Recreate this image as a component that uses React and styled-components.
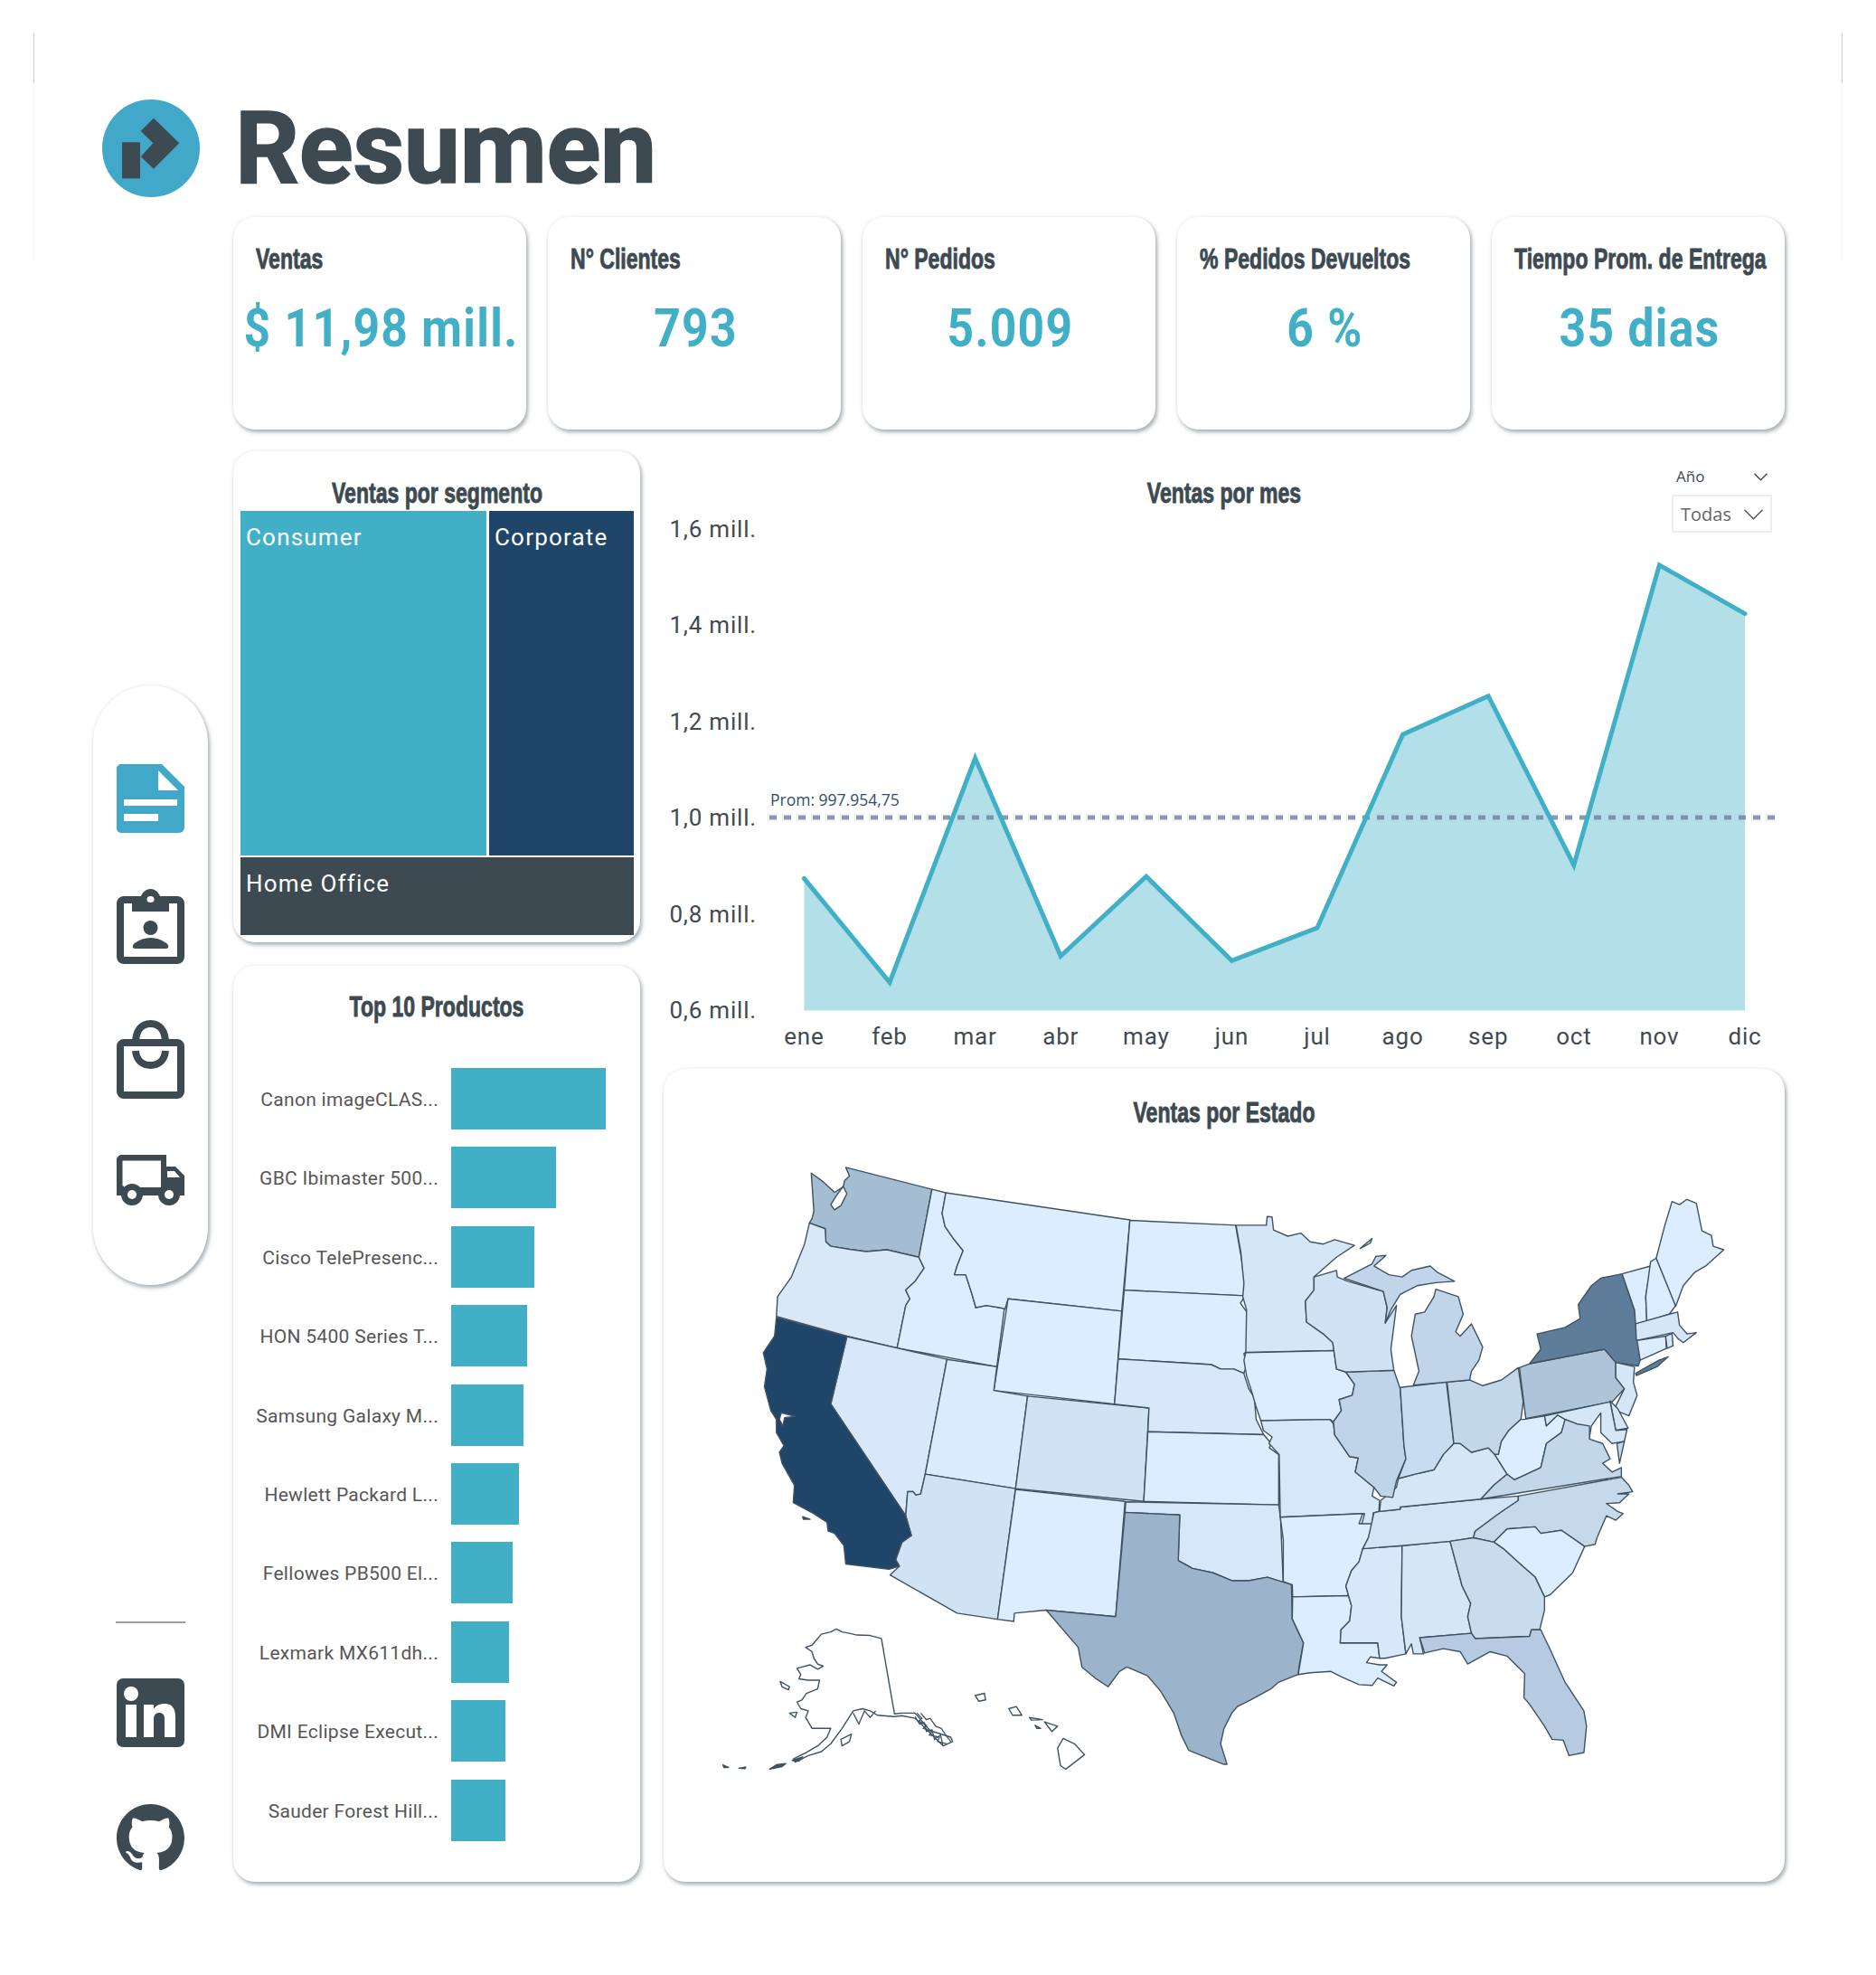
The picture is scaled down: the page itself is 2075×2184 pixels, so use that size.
import styled, { createGlobalStyle } from "styled-components";

const GlobalStyle = createGlobalStyle`
  html, body {
    margin: 0;
    padding: 0;
    background: #fff;
  }
  * {
    box-sizing: border-box;
  }
`;

const DARK = "#3d4a52";
const TEAL = "#41b0c7";
const TITLE_FONT = `"Liberation Sans", sans-serif`;
const DIN_FONT = `Roboto, "Liberation Sans", sans-serif`;

const Page = styled.div`
  position: relative;
  width: 2075px;
  height: 2184px;
  padding: 110px 101px 0 103px;
  overflow: hidden;
  background: #fff;
  color: ${DARK};
`;

const CornerLine = styled.div`
  position: absolute;
  top: 37px;
  ${(p) => (p.$right ? "right: 37px;" : "left: 37px;")}
  width: 1px;
  height: 253px;
  background: linear-gradient(#d4d4d4 0, #d4d4d4 53px, #f9f9f9 54px, #f9f9f9 100%);
`;

const Header = styled.header`
  display: flex;
  align-items: center;
  gap: 39px;
  height: 108px;
  margin-left: 10px;
`;

const LogoMark = styled.svg`
  width: 108px;
  height: 108px;
  flex: none;
`;

const PageTitle = styled.h1`
  margin: 0;
  font: 700 111px/108px ${DIN_FONT};
  letter-spacing: -0.4px;
  color: ${DARK};
  -webkit-text-stroke: 1.6px ${DARK};
`;

const Body = styled.div`
  display: flex;
  gap: 28px;
  margin-top: 22px;
`;

const Rail = styled.aside`
  display: flex;
  flex-direction: column;
  align-items: center;
  width: 127px;
  flex: none;
  padding-top: 518px;
`;

const Pill = styled.nav`
  display: flex;
  flex-direction: column;
  align-items: center;
  gap: 62px;
  width: 127px;
  height: 663px;
  padding-top: 87px;
  border-radius: 64px;
  background: #fff;
  box-shadow: 2px 3px 4px rgba(90, 105, 115, 0.5), 0 0 5px rgba(90, 105, 115, 0.12);
`;

const RailIcon = styled.svg`
  display: block;
  width: 75px;
  height: ${(p) => p.$h}px;
  flex: none;
`;

const Divider = styled.div`
  width: 77px;
  height: 2px;
  margin-top: 372px;
  background: #9a9fa3;
`;

const SocialList = styled.div`
  display: flex;
  flex-direction: column;
  gap: 63px;
  margin-top: 61px;
`;

const Content = styled.main`
  display: flex;
  flex-direction: column;
  gap: 24px;
  width: 1716px;
`;

const KpiRow = styled.section`
  display: flex;
  gap: 24px;
`;

const Card = styled.div`
  background: #fff;
  border-radius: 24px;
  box-shadow: 2px 3px 4px rgba(90, 105, 115, 0.5), 0 0 5px rgba(90, 105, 115, 0.12);
`;

const KpiCard = styled(Card)`
  width: 324px;
  height: 235px;
  padding: 28px 0 0 25px;
`;

const CardTitle = styled.h2`
  margin: 0;
  font: 700 32px/36px ${TITLE_FONT};
  color: ${DARK};
  white-space: nowrap;
  transform: scaleX(0.72);
  transform-origin: ${(p) => (p.$left ? "left center" : "center")};
  text-align: ${(p) => (p.$left ? "left" : "center")};
  -webkit-text-stroke: 0.9px ${DARK};
`;

const KpiValue = styled.div`
  display: flex;
  justify-content: center;
  margin: 24px 0 0 -22px;
  font: 700 60px/70px ${DIN_FONT};
  letter-spacing: 1.5px;
  color: ${TEAL};
  white-space: nowrap;
  transform: scaleX(0.86);
`;

const Lower = styled.section`
  display: grid;
  grid-template-columns: 450px 1240px;
  gap: 26px;
`;

const LeftColumn = styled.div`
  display: flex;
  flex-direction: column;
  gap: 26px;
`;

const RightColumn = styled.div`
  display: flex;
  flex-direction: column;
`;

const TreeCard = styled(Card)`
  height: 543px;
  padding: 28px 7px 8px 8px;
`;

const TreeMap = styled.div`
  display: grid;
  grid-template-columns: 272px 160px;
  grid-template-rows: 381px 86px;
  gap: 2px 3px;
  margin-top: 2px;
`;

const TreeCell = styled.div`
  grid-column: ${(p) => p.$span || "auto"};
  padding: 13px 6px;
  background: ${(p) => p.$bg};
  color: #fff;
  font: 400 26px/32px ${DIN_FONT};
  letter-spacing: 1.2px;
`;

const TopCard = styled(Card)`
  height: 1013px;
  padding: 27px 0 0 0;
`;

const BarList = styled.div`
  display: flex;
  flex-direction: column;
  gap: 19.4px;
  margin-top: 50px;
`;

const BarRow = styled.div`
  display: flex;
  align-items: center;
  gap: 14px;
  height: 68px;
`;

const BarLabel = styled.div`
  width: 227px;
  flex: none;
  padding-top: 2px;
  text-align: right;
  font: 400 21px/26px ${DIN_FONT};
  letter-spacing: 0.3px;
  color: #565656;
  white-space: nowrap;
`;

const Bar = styled.div`
  height: 68px;
  background: ${TEAL};
`;

const LineSection = styled.div`
  position: relative;
  height: 683px;
  padding-top: 28px;
`;

const ChartSvg = styled.svg`
  display: block;
  width: 1240px;
  height: 619px;
`;

const AxisText = styled.text`
  font: 400 26px ${DIN_FONT};
  letter-spacing: 0.8px;
  fill: #3f4a52;
  dominant-baseline: middle;
  text-anchor: ${(p) => p.$anchor};
`;

const AvgText = styled.text`
  font: 400 17.5px "Open Sans", sans-serif;
  fill: #2f4d6e;
  dominant-baseline: middle;
`;

const Slicer = styled.div`
  position: absolute;
  top: 18px;
  right: 14px;
  width: 111px;
`;

const SlicerHead = styled.div`
  display: flex;
  align-items: center;
  justify-content: space-between;
  height: 20px;
  padding: 0 5px;
  font: 500 17px/20px "Open Sans", sans-serif;
  color: #3d4a52;
`;

const SlicerBox = styled.div`
  display: flex;
  align-items: center;
  justify-content: space-between;
  height: 42px;
  margin-top: 10px;
  padding: 2px 8px 0;
  border: 2px solid #eeeeee;
  font: 400 20px/26px "Open Sans", sans-serif;
  color: #666;
`;

const Chevron = styled.svg`
  display: block;
  width: ${(p) => p.$w}px;
  height: ${(p) => Math.round(p.$w / 2) + 1}px;
  fill: none;
  stroke: ${(p) => p.$stroke};
  stroke-width: 1.5;
`;

const MapCard = styled(Card)`
  height: 899px;
  padding-top: 30px;
`;

const MapSvg = styled.svg`
  display: block;
  width: 1240px;
  height: 833px;
`;

const StateShape = styled.polygon`
  fill: ${(p) => p.$fill};
  stroke: #3f5261;
  stroke-width: 1.4;
  stroke-linejoin: round;
  vector-effect: non-scaling-stroke;
`;

const CoastLine = styled.polyline`
  fill: none;
  stroke: #3f5261;
  stroke-width: 1.3;
  vector-effect: non-scaling-stroke;
`;

// puntos tomados en la escala 2.412 x 2.063 de cada mitad del mapa
const WEST = [
  ["#a5bdd2", "375,105 385,125 372,135 368,150 345,162 315,138 283,118 290,205 285,222 278,232 320,245 322,275 335,285 385,292 430,297 485,293 570,310 605,155"],
  ["#fff", "335,190 350,170 368,148 378,165 362,192 345,202"],
  ["#d8e8f8", "278,232 320,245 322,275 335,285 385,292 430,297 485,293 570,310 584,335 560,365 535,385 546,405 535,420 512,517 378,490 190,445 193,400 230,355 265,280"],
  ["#dcedff", "605,155 642,163 632,210 640,240 660,265 688,295 672,330 665,350 695,350 712,395 722,425 750,420 785,425 800,415 778,560 512,517 535,420 546,405 535,385 560,365 584,335 570,310"],
  ["#dcedff", "642,163 1133,225 1111,433 808,405 800,428 785,425 750,420 722,425 712,395 695,350 665,350 672,330 688,295 660,265 640,240 632,210"],
  ["#dcedff", "808,405 1111,433 1092,645 770,614"],
  ["#d8e8fa", "378,491 645,543 587,805 575,850 562,853 555,845 540,845 535,900 335,645"],
  ["#d9ebfc", "645,543 778,560 770,614 860,627 828,838 587,805"],
  ["#cfe3f5", "860,627 1184,654 1170,867 828,838"],
  ["#cfe3f5", "587,805 828,838 780,1136 672,1122 493,1035 518,1015 508,1000 525,960 550,945 535,900 540,845 555,845 562,853 575,850"],
  ["#dcedff", "828,840 1120,867 1095,1130 908,1115 825,1122 823,1141 780,1136"],
  ["#1f4568", "190,447 378,491 335,645 535,900 550,945 525,960 508,1000 518,1015 490,1022 375,1010 370,968 345,940 328,935 325,915 290,895 235,870 238,830 205,780 198,755 210,740 190,710 190,680 175,660 158,605 165,565 155,528 185,490"],
  ["#1f4568", "260,902 280,908 262,908"],
  ["#dcedff", "1133,226 1415,237 1430,310 1440,375 1440,398 1118,385"],
  ["#dcedff", "1118,385 1440,398 1428,415 1445,435 1445,525 1437,530 1445,555 1437,575 1410,565 1375,565 1350,555 1102,542"],
  ["#d8e8fa", "1102,542 1350,555 1375,565 1410,565 1437,575 1450,610 1465,630 1470,680 1490,715 1181,708 1184,654 1092,645"],
  ["#dcedff", "1181,708 1490,715 1510,735 1505,745 1530,760 1530,875 1170,867"],
  ["#d5e7f9", "1122,868 1530,875 1535,905 1542,1052 1500,1040 1450,1048 1405,1048 1355,1030 1300,1020 1262,1002 1266,898 1120,892"],
  ["#9cb3cc", "1120,892 1266,898 1262,1002 1300,1020 1355,1030 1405,1048 1450,1048 1500,1040 1545,1052 1564,1057 1566,1135 1596,1190 1584,1245 1582,1262 1529,1280 1509,1295 1455,1320 1420,1335 1405,1350 1384,1385 1375,1420 1392,1467 1384,1467 1290,1435 1270,1400 1250,1350 1215,1300 1180,1265 1125,1245 1105,1255 1075,1290 1040,1270 1005,1245 995,1200 910,1115 1095,1130"],
];

const CALIFORNIA_BAY = "203,665 240,673 212,676 207,695 198,680";

const EAST = [
  ["#d5e6f6", "162,237 243,237 245,217 258,218 262,248 300,262 335,255 360,275 395,280 425,270 478,283 430,310 370,355 370,385 347,410 350,458 395,485 420,505 423,523 188,527 190,430 180,400 183,370 175,300"],
  ["#dcedff", "188,528 423,523 430,565 455,572 478,600 472,625 437,635 443,660 422,685 412,680 228,683 215,650 205,620 190,580 183,545"],
  ["#d5e7f9", "228,683 412,680 422,690 425,715 465,765 488,768 480,800 530,835 525,855 545,865 543,890 528,893 525,920 497,920 505,895 280,903 277,760 250,735 258,720 235,705"],
  ["#dcedff", "280,903 500,895 490,918 527,918 515,950 500,975 490,1005 470,1025 455,1060 462,1082 313,1085 312,1057 288,1050 288,955"],
  ["#dcedff", "313,1085 462,1082 470,1105 465,1140 442,1160 440,1190 540,1190 545,1225 520,1222 510,1235 545,1240 565,1240 550,1255 590,1280 583,1288 540,1270 525,1287 490,1285 445,1268 415,1255 360,1258 328,1262 342,1190 312,1135"],
  ["#d8e8fa", "500,975 605,968 603,1130 615,1215 560,1225 545,1225 540,1190 440,1190 442,1160 465,1140 470,1105 462,1082 455,1060 470,1025 490,1005"],
  ["#d5e7f7", "605,968 733,958 765,1060 788,1100 780,1130 790,1168 652,1178 662,1215 635,1215 630,1192 615,1215 603,1130"],
  ["#d2e5f6", "545,890 600,885 600,880 815,862 915,855 915,865 880,885 855,900 800,935 795,950 733,958 605,968 500,975 515,950 530,893"],
  ["#d5e7f7", "548,865 590,835 595,815 640,805 665,800 690,795 715,760 743,735 760,735 790,755 835,745 852,760 885,805 850,830 815,862 600,880 600,885 545,890"],
  ["#bfd4e8", "455,572 583,568 600,610 610,740 615,770 590,820 580,858 548,855 530,835 480,800 488,768 465,765 425,715 422,685 443,660 437,635 472,625 478,600"],
  ["#c6dcf0", "600,607 723,595 743,735 715,760 690,795 665,800 640,805 595,815 615,770 610,740"],
  ["#c2d7ea", "725,595 785,590 820,603 870,590 915,562 928,640 922,680 890,705 870,730 862,760 852,760 835,745 790,755 760,735 743,735"],
  ["#d0e3f4", "370,355 430,340 432,355 460,365 555,388 565,425 560,460 590,420 575,520 583,568 455,572 430,565 423,523 420,505 395,485 350,458 347,410 370,385"],
  ["#c0d5e9", "450,358 525,325 535,308 562,306 530,330 570,350 605,355 630,340 680,330 700,345 745,365 695,368 645,375 600,395 575,430 560,460 565,425 555,388"],
  ["#c0d5e9", "635,602 650,570 630,490 640,440 665,435 690,400 695,383 755,400 768,440 748,480 760,490 790,462 820,515 810,545 790,570 785,590 723,595"],
  ["#c0d5e9", "493,290 525,267 520,278"],
  ["#dcedff", "930,680 985,672 990,695 1020,670 1040,680 1030,710 990,735 975,790 905,818 885,805 852,760 862,760 870,730 890,705 922,680"],
  ["#aec4d9", "918,562 945,553 1145,520 1175,550 1175,585 1198,610 1165,640 935,678"],
  ["#5e7d9b", "945,553 975,520 965,485 1040,470 1080,450 1075,418 1110,375 1135,358 1192,348 1225,430 1235,500 1240,545 1235,558 1175,550 1145,520"],
  ["#5e7d9b", "1228,575 1290,545 1315,537 1285,560 1230,580"],
  ["#dcedff", "1192,348 1268,330 1255,400 1258,458 1228,462 1225,430"],
  ["#dcedff", "1268,320 1283,312 1335,420 1318,440 1258,458 1255,400"],
  ["#dcedff", "1283,312 1305,240 1325,183 1345,190 1365,178 1390,187 1405,250 1430,260 1435,285 1463,293 1415,330 1385,345 1355,375 1335,422"],
  ["#d5e7f7", "1228,462 1318,440 1340,435 1345,465 1365,485 1390,482 1355,505 1340,495 1328,482 1230,500"],
  ["#dcedff", "1232,500 1308,490 1310,518 1240,545"],
  ["#d5e7f7", "1308,490 1325,484 1328,512 1312,518"],
  ["#d5e7f7", "1175,550 1225,560 1222,595 1232,625 1210,672 1170,658 1198,610 1175,585"],
  ["#d5e7f7", "1160,638 1180,655 1208,700 1175,705"],
  ["#d5e7f7", "985,672 1160,640 1175,705 1205,703 1198,730 1165,735 1135,710 1135,665 1110,695 1105,720 1070,690 1040,680 1020,670 990,695"],
  ["#c2d7ea", "815,862 850,830 885,805 905,818 975,790 990,735 1030,710 1040,680 1070,690 1105,695 1105,725 1140,735 1160,770 1140,780 1165,800 1190,790 1190,810"],
  ["#c2d7ea", "1178,735 1198,730 1185,780"],
  ["#c5d9eb", "1190,812 1210,830 1220,845 1180,850 1210,850 1185,870 1150,872 1180,890 1195,895 1175,910 1150,900 1125,950 1120,965 1092,970 1030,933 975,940 960,925 885,930 850,960 795,950 800,935 855,900 880,885 915,865 915,855"],
  ["#dcedff", "850,960 885,930 960,925 975,940 1030,933 1092,970 1060,1030 1000,1080 985,1085 960,1040 920,1010 875,975"],
  ["#c9dcee", "733,958 795,950 850,960 875,975 920,1010 960,1040 985,1085 985,1115 972,1160 950,1160 945,1175 800,1180 790,1168 780,1130 788,1100 765,1060"],
  ["#b6cbe1", "652,1178 790,1168 800,1180 945,1175 950,1160 975,1160 1000,1205 1040,1280 1090,1345 1097,1380 1090,1440 1050,1447 1035,1412 1005,1410 985,1380 945,1330 930,1315 932,1260 885,1220 840,1210 780,1238 760,1210 715,1203 665,1213"],
];

const ALASKA_HAWAII = [
  "470,1180 505,1352 525,1350 560,1350 600,1390 655,1405 660,1415 635,1425 600,1395 560,1362 525,1356 505,1358 460,1355 440,1345 420,1340 395,1345 380,1365 365,1385 335,1420 310,1438 275,1447 240,1462 235,1455 270,1440 300,1425 325,1405 335,1385 310,1385 285,1385 268,1360 275,1345 255,1340 245,1325 258,1320 270,1305 300,1295 305,1275 275,1275 250,1272 255,1262 245,1248 280,1240 300,1250 315,1243 300,1238 290,1225 285,1210 268,1200 285,1195 300,1180 310,1170 335,1165 350,1158 365,1165 385,1168 405,1172 440,1173",
  "200,1278 225,1290 222,1297 205,1290",
  "225,1350 245,1348 240,1360",
  "362,1410 390,1398 385,1415 365,1425",
  "720,1310 745,1305 748,1320 730,1323",
  "810,1340 830,1335 845,1355 820,1355",
  "865,1360 900,1365 870,1366",
  "880,1378 895,1385 885,1385",
  "905,1370 940,1380 925,1392",
  "940,1430 955,1408 985,1420 1012,1445 962,1478 948,1470",
];

const ALEUTIANS = [
  "47,1468 62,1474 50,1474",
  "90,1476 108,1473 106,1477",
  "172,1478 190,1468 215,1465 205,1472",
  "232,1458 260,1450 250,1460",
];

const PANHANDLE = [
  "565,1350 578,1362 570,1368 590,1378 582,1385 605,1392 598,1400 625,1405 620,1415 645,1420",
  "560,1358 572,1375 585,1372 590,1392 605,1388 612,1410 628,1400 634,1424",
  "575,1350 590,1365 600,1362 615,1380 630,1385 640,1398 655,1415",
  "395,1350 410,1375 425,1345 440,1360 455,1345",
];

const MONTHS = [
  ["ene", 971.4],
  ["feb", 1086.3],
  ["mar", 838.3],
  ["abr", 1057.3],
  ["may", 969.2],
  ["jun", 1062.4],
  ["jul", 1026],
  ["ago", 812.2],
  ["sep", 769.7],
  ["oct", 956.6],
  ["nov", 624.9],
  ["dic", 678.7],
];
const monthX = (i) => 889.4 + i * 94.6;
const linePoints = MONTHS.map(([, y], i) => `${monthX(i)},${y}`).join(" ");
const BASE_Y = 1117.5;
const AXIS = [
  ["1,6 mill.", 587.5],
  ["1,4 mill.", 693.5],
  ["1,2 mill.", 800.5],
  ["1,0 mill.", 906.5],
  ["0,8 mill.", 1013.5],
  ["0,6 mill.", 1119.5],
];

const KPIS = [
  ["Ventas", "$ 11,98 mill."],
  ["N° Clientes", "793"],
  ["N° Pedidos", "5.009"],
  ["% Pedidos Devueltos", "6 %"],
  ["Tiempo Prom. de Entrega", "35 dias"],
];

const PRODUCTS = [
  ["Canon imageCLAS...", 171],
  ["GBC Ibimaster 500...", 116],
  ["Cisco TelePresenc...", 92],
  ["HON 5400 Series T...", 84],
  ["Samsung Galaxy M...", 80],
  ["Hewlett Packard L...", 75],
  ["Fellowes PB500 El...", 68],
  ["Lexmark MX611dh...", 64],
  ["DMI Eclipse Execut...", 60],
  ["Sauder Forest Hill...", 60],
];

const App = () => {
  return (
    <Page>
      <GlobalStyle />
      <CornerLine />
      <CornerLine $right />
      <Header>
        <LogoMark viewBox="113 110 108 108">
          <circle cx="167" cy="164" r="54" fill="#42a8c9" />
          <rect x="135" y="157.3" width="20" height="40" fill={DARK} />
          <polygon points="170,130.7 198.3,158.3 170,186.7 155.7,173.3 169.3,158.3 155.7,145" fill={DARK} />
        </LogoMark>
        <PageTitle>Resumen</PageTitle>
      </Header>

      <Body>
        <Rail>
          <Pill>
            <RailIcon $h={76} viewBox="0 0 75 76">
              <path d="M5 0H50L75 25V70a6 6 0 0 1-6 6H5a5 5 0 0 1-5-5V5a5 5 0 0 1 5-5Z" fill="#42a8c9" />
              <path d="M46 7V29H68Z" fill="#fff" />
              <rect x="8" y="39" width="59" height="7" fill="#fff" />
              <rect x="8" y="55" width="38" height="8" fill="#fff" />
            </RailIcon>
            <RailIcon $h={83} viewBox="0 0 75 83">
              <rect x="4" y="12" width="67" height="67" rx="4" fill="none" stroke={DARK} strokeWidth="8" />
              <path d="M17 8H27C29 3 33 0 37.5 0S46 3 48 8H58V25H17Z" fill={DARK} />
              <ellipse cx="37.5" cy="11.5" rx="4" ry="3.5" fill="#fff" />
              <circle cx="37.5" cy="43" r="8" fill={DARK} />
              <path d="M20 66C17 66 17 62 20 60C30 52 45 52 55 60C58 62 58 66 55 66Z" fill={DARK} />
            </RailIcon>
            <RailIcon $h={87} viewBox="0 0 75 87">
              <rect x="4" y="25" width="67" height="58" rx="4" fill="none" stroke={DARK} strokeWidth="8" />
              <path d="M21 26C21 11 28 4 37.5 4S54 11 54 26" fill="none" stroke={DARK} strokeWidth="8" />
              <path d="M21 34C22 45 29 50 37.5 50S53 45 54 34" fill="none" stroke={DARK} strokeWidth="8" />
            </RailIcon>
            <RailIcon $h={56} viewBox="0 0 75 56">
              <path d="M54 3H7a4 4 0 0 0-4 4V38H8" fill="none" stroke={DARK} strokeWidth="7" />
              <path d="M49 0H55V13H65L75 23V45H0V36H49Z" fill={DARK} />
              <path d="M56 18H64L70 25H56Z" fill="#fff" />
              <circle cx="17" cy="44" r="12" fill={DARK} />
              <circle cx="17" cy="44" r="5" fill="#fff" />
              <circle cx="58" cy="44" r="12" fill={DARK} />
              <circle cx="58" cy="44" r="5" fill="#fff" />
            </RailIcon>
          </Pill>
          <Divider />
          <SocialList>
            <RailIcon $h={76} viewBox="0 0 75 76">
              <rect width="75" height="76" rx="7" fill={DARK} />
              <circle cx="16" cy="17" r="8" fill="#fff" />
              <rect x="10" y="29" width="12" height="36" fill="#fff" />
              <path d="M30 29H41V34C43 30 48 28 53 28C62 28 65 34 65 43V65H53V45C53 40 51 38 47 38C43 38 41 41 41 45V65H30Z" fill="#fff" />
            </RailIcon>
            <RailIcon $h={75} viewBox="0 0 16 16">
              <path
                fill={DARK}
                d="M8 0C3.58 0 0 3.58 0 8c0 3.54 2.29 6.53 5.47 7.59.4.07.55-.17.55-.38 0-.19-.01-.82-.01-1.49-2.01.37-2.53-.49-2.69-.94-.09-.23-.48-.94-.82-1.13-.28-.15-.68-.52-.01-.53.63-.01 1.08.58 1.23.82.72 1.21 1.87.87 2.33.66.07-.52.28-.87.51-1.07-1.78-.2-3.64-.89-3.64-3.95 0-.87.31-1.59.82-2.15-.08-.2-.36-1.02.08-2.12 0 0 .67-.21 2.2.82.64-.18 1.32-.27 2-.27.68 0 1.36.09 2 .27 1.53-1.04 2.2-.82 2.2-.82.44 1.1.16 1.92.08 2.12.51.56.82 1.27.82 2.15 0 3.07-1.87 3.75-3.65 3.95.29.25.54.73.54 1.48 0 1.07-.01 1.93-.01 2.2 0 .21.15.46.55.38A8.013 8.013 0 0016 8c0-4.42-3.58-8-8-8z"
              />
            </RailIcon>
          </SocialList>
        </Rail>

        <Content>
          <KpiRow>
            {KPIS.map(([label, value]) => (
              <KpiCard key={label}>
                <CardTitle $left>{label}</CardTitle>
                <KpiValue>{value}</KpiValue>
              </KpiCard>
            ))}
          </KpiRow>

          <Lower>
            <LeftColumn>
              <TreeCard>
                <CardTitle>Ventas por segmento</CardTitle>
                <TreeMap>
                  <TreeCell $bg={TEAL}>Consumer</TreeCell>
                  <TreeCell $bg="#1f4569">Corporate</TreeCell>
                  <TreeCell $bg="#3e4a52" $span="1 / span 2">
                    Home Office
                  </TreeCell>
                </TreeMap>
              </TreeCard>
              <TopCard>
                <CardTitle>Top 10 Productos</CardTitle>
                <BarList>
                  {PRODUCTS.map(([name, width]) => (
                    <BarRow key={name}>
                      <BarLabel>{name}</BarLabel>
                      <Bar style={{ width }} />
                    </BarRow>
                  ))}
                </BarList>
              </TopCard>
            </LeftColumn>

            <RightColumn>
              <LineSection>
                <CardTitle>Ventas por mes</CardTitle>
                <Slicer>
                  <SlicerHead>
                    Año
                    <Chevron $w={15} $stroke="#3d4a52" viewBox="0 0 15 8.5">
                      <polyline points="0.5,0.5 7.5,7.5 14.5,0.5" />
                    </Chevron>
                  </SlicerHead>
                  <SlicerBox>
                    Todas
                    <Chevron $w={21} $stroke="#555" viewBox="0 0 21 11.5">
                      <polyline points="0.5,0.5 10.5,10.5 20.5,0.5" />
                    </Chevron>
                  </SlicerBox>
                </Slicer>
                <ChartSvg viewBox="734 563 1240 619">
                  <polygon
                    points={`${monthX(0)},${BASE_Y} ${linePoints} ${monthX(11)},${BASE_Y}`}
                    fill="#b2dfe8"
                  />
                  <line x1="851" y1="904" x2="1969" y2="904" stroke="#7188a3" strokeOpacity="0.85" strokeWidth="5" strokeDasharray="8 8" />
                  <polyline points={linePoints} fill="none" stroke={TEAL} strokeWidth="5" strokeLinecap="round" />
                  <AvgText x="852" y="886">
                    Prom: 997.954,75
                  </AvgText>
                  {AXIS.map(([label, y]) => (
                    <AxisText key={label} x="837" y={y} $anchor="end">
                      {label}
                    </AxisText>
                  ))}
                  {MONTHS.map(([label], i) => (
                    <AxisText key={label} x={monthX(i)} y="1148" $anchor="middle">
                      {label}
                    </AxisText>
                  ))}
                </ChartSvg>
              </LineSection>

              <MapCard>
                <CardTitle>Ventas por Estado</CardTitle>
                <MapSvg viewBox="734 1248 1240 833">
                  <g transform="translate(780 1240) scale(0.4146 0.4847)">
                    {WEST.map(([fill, points]) => (
                      <StateShape key={points} $fill={fill} points={points} />
                    ))}
                    <StateShape $fill="#fff" points={CALIFORNIA_BAY} />
                    {ALASKA_HAWAII.map((points) => (
                      <StateShape key={points} $fill="#fff" points={points} />
                    ))}
                    {ALEUTIANS.map((points) => (
                      <StateShape key={points} $fill="#3f5261" points={points} />
                    ))}
                    {PANHANDLE.map((points) => (
                      <CoastLine key={points} points={points} />
                    ))}
                  </g>
                  <g transform="translate(1300 1240) scale(0.4146 0.4847)">
                    {EAST.map(([fill, points]) => (
                      <StateShape key={points} $fill={fill} points={points} />
                    ))}
                  </g>
                </MapSvg>
              </MapCard>
            </RightColumn>
          </Lower>
        </Content>
      </Body>
    </Page>
  );
};

export default App;
